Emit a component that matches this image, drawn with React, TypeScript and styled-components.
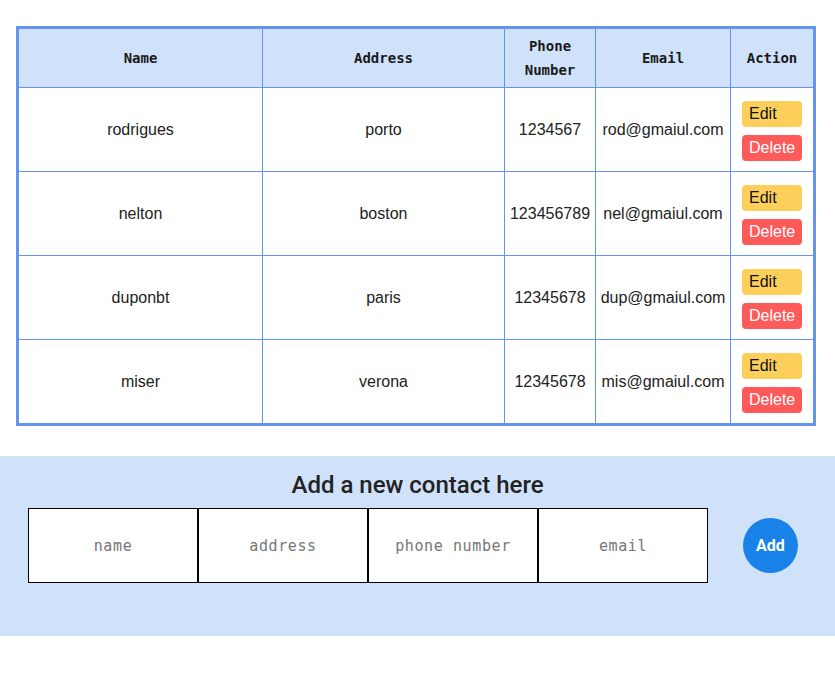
import styled, { createGlobalStyle } from 'styled-components';

const GlobalStyle = createGlobalStyle`
  body {
    margin: 0;
    background: #ffffff;
    font-family: 'Liberation Sans', Arial, sans-serif;
    color: #222222;
  }
`;

const PageLayout = styled.div`
  display: flex;
  flex-direction: column;
  padding-top: 26px;
`;

const TableWrapper = styled.div`
  padding: 0 16px;
`;

const ContactTable = styled.table`
  width: 800px;
  border-collapse: separate;
  border-spacing: 0;
  border: 3px solid #6495ed;
`;

const HeadCell = styled.th<{ $w: number }>`
  width: ${({ $w }) => $w}px;
  box-sizing: border-box;
  padding: 5px 4px;
  height: 59px;
  background-color: #d0e2fa;
  font-family: 'DejaVu Sans Mono', monospace;
  font-size: 14px;
  font-weight: 700;
  line-height: 24px;
  color: #1a1a1a;
  border-bottom: 1px solid #6495ed;
  border-right: 1px solid #6495ed;

  &:last-child {
    border-right: none;
  }
`;

const Row = styled.tr`
  &:last-child td {
    border-bottom: none;
    height: 83px;
  }
`;

const Cell = styled.td`
  padding: 0 4px;
  height: 84px;
  box-sizing: border-box;
  text-align: center;
  vertical-align: middle;
  font-size: 16px;
  color: #222222;
  border-bottom: 1px solid #6495ed;
  border-right: 1px solid #6495ed;
  white-space: nowrap;

  &:last-child {
    border-right: none;
  }
`;

const ActionCell = styled(Cell)`
  padding: 13px 11px 9px;
  vertical-align: top;
`;

const ActionList = styled.div`
  display: flex;
  flex-direction: column;
  gap: 8px;
`;

const ActionButton = styled.button<{ $danger?: boolean }>`
  width: 60px;
  height: 26px;
  padding: 0 7px;
  border: none;
  border-radius: 4px;
  text-align: left;
  font-family: 'Liberation Sans', Arial, sans-serif;
  font-size: 16px;
  background-color: ${({ $danger }) => ($danger ? '#ff5a5a' : '#fccf5b')};
  color: ${({ $danger }) => ($danger ? '#ffffff' : '#111111')};
  cursor: pointer;
`;

const FormSection = styled.section`
  margin-top: 30px;
  height: 180px;
  box-sizing: border-box;
  padding: 15px 0 0 28px;
  background-color: #d0e2fa;
`;

const FormTitle = styled.h2`
  margin: 0 0 9px;
  padding-right: 28px;
  text-align: center;
  font-family: Roboto, 'Liberation Sans', sans-serif;
  font-size: 24px;
  font-weight: 500;
  line-height: 28px;
  color: #222222;
`;

const FormRow = styled.div`
  display: flex;
  align-items: center;
  gap: 35px;
`;

const InputList = styled.div`
  display: flex;
`;

const FormInput = styled.input`
  width: 170px;
  height: 75px;
  box-sizing: border-box;
  border: 1px solid #000000;
  padding: 0 8px;
  text-align: center;
  background: #ffffff;
  font-family: 'DejaVu Sans Mono', monospace;
  font-size: 15px;
  letter-spacing: 0.6px;
  outline: none;

  &::placeholder {
    color: #767676;
  }
`;

const AddButton = styled.button`
  width: 55px;
  height: 55px;
  border: none;
  border-radius: 50%;
  background-color: #1982e8;
  color: #ffffff;
  font-family: Roboto, 'Liberation Sans', sans-serif;
  font-size: 16px;
  font-weight: 700;
  cursor: pointer;
`;

const contacts = [
  { name: 'rodrigues', address: 'porto', phone: '1234567', email: 'rod@gmaiul.com' },
  { name: 'nelton', address: 'boston', phone: '123456789', email: 'nel@gmaiul.com' },
  { name: 'duponbt', address: 'paris', phone: '12345678', email: 'dup@gmaiul.com' },
  { name: 'miser', address: 'verona', phone: '12345678', email: 'mis@gmaiul.com' },
];

export default function App() {
  return (
    <PageLayout>
      <GlobalStyle />
      <TableWrapper>
        <ContactTable>
          <thead>
            <tr>
              <HeadCell $w={244}>Name</HeadCell>
              <HeadCell $w={242}>Address</HeadCell>
              <HeadCell $w={91}>Phone Number</HeadCell>
              <HeadCell $w={135}>Email</HeadCell>
              <HeadCell $w={82}>Action</HeadCell>
            </tr>
          </thead>
          <tbody>
            {contacts.map((c) => (
              <Row key={c.name}>
                <Cell>{c.name}</Cell>
                <Cell>{c.address}</Cell>
                <Cell>{c.phone}</Cell>
                <Cell>{c.email}</Cell>
                <ActionCell>
                  <ActionList>
                    <ActionButton>Edit</ActionButton>
                    <ActionButton $danger>Delete</ActionButton>
                  </ActionList>
                </ActionCell>
              </Row>
            ))}
          </tbody>
        </ContactTable>
      </TableWrapper>
      <FormSection>
        <FormTitle>Add a new contact here</FormTitle>
        <FormRow>
          <InputList>
            <FormInput placeholder="name" />
            <FormInput placeholder="address" />
            <FormInput placeholder="phone number" />
            <FormInput placeholder="email" />
          </InputList>
          <AddButton>Add</AddButton>
        </FormRow>
      </FormSection>
    </PageLayout>
  );
}
